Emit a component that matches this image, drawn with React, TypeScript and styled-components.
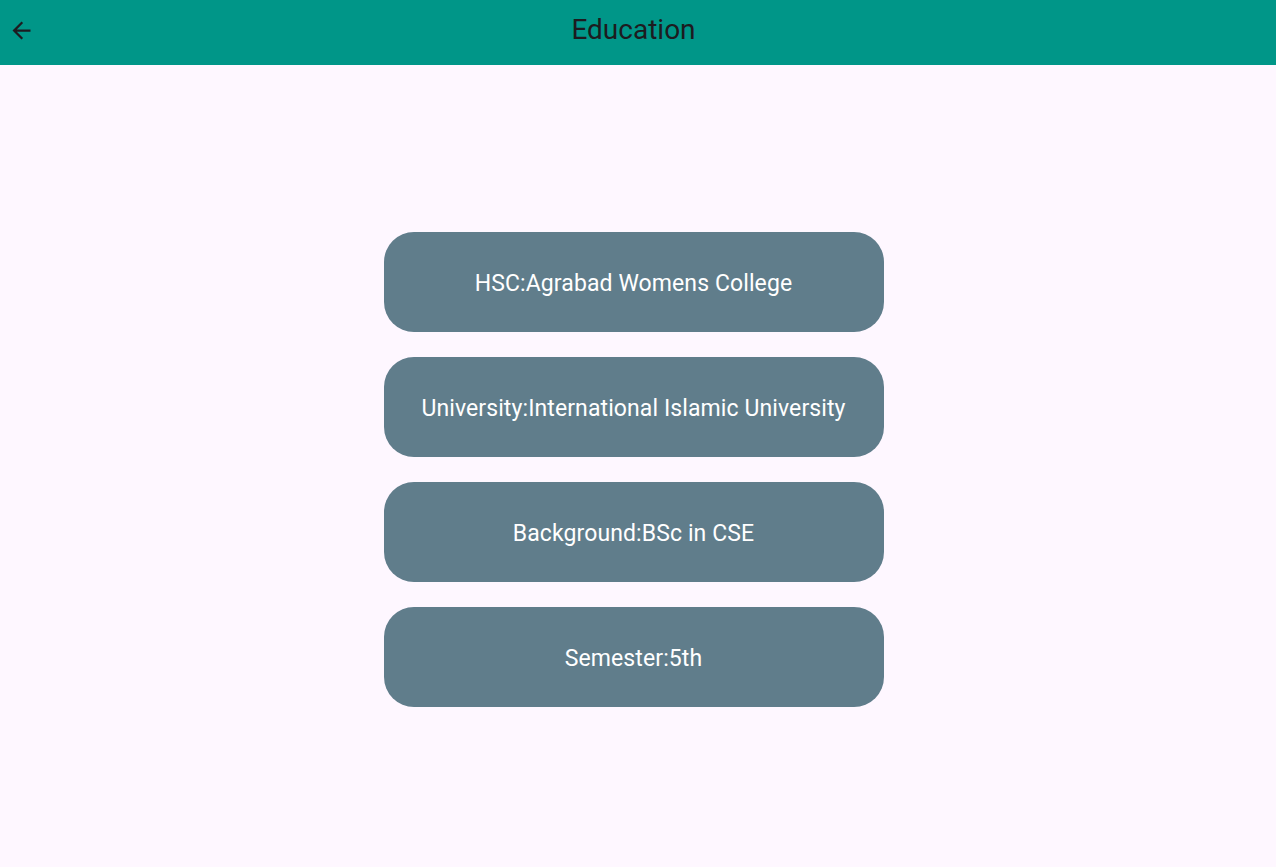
import React from "react";
import styled, { createGlobalStyle } from "styled-components";

const Global = createGlobalStyle`
  html, body { margin: 0; padding: 0; background: #fef7ff; }
  body { font-family: Roboto, "Noto Sans", sans-serif; }
`;

const Page = styled.div`
  width: 1267px;
  height: 867px;
  display: flex;
  flex-direction: column;
  background: #fef7ff;
`;

const AppBar = styled.header`
  height: 65px;
  flex: none;
  background: #009688;
  display: flex;
  align-items: center;
  position: relative;
  margin-right: -9px;
`;

const BackButton = styled.button`
  width: 48px;
  height: 48px;
  border: none;
  background: transparent;
  padding: 0 0 0 8px;
  display: flex;
  align-items: center;
  justify-content: flex-start;
  cursor: pointer;
  color: #1d1b20;
  margin-top: -5px;
`;

const Title = styled.h1`
  position: absolute;
  left: 0;
  right: 9px;
  top: 0;
  margin: 0;
  height: 60px;
  line-height: 60px;
  text-align: center;
  font-size: 28px;
  font-weight: 400;
  color: #1d1b20;
  pointer-events: none;
`;

const Body = styled.main`
  flex: 1;
  display: flex;
  flex-direction: column;
  align-items: center;
  padding-top: 167px;
  gap: 25px;
`;

const InfoButton = styled.button`
  width: 500px;
  height: 100px;
  border: none;
  border-radius: 30px;
  background: #607d8b;
  color: #ffffff;
  font-family: Roboto, "Noto Sans", sans-serif;
  font-size: 23px;
  font-weight: 400;
  letter-spacing: 0.1px;
  display: flex;
  align-items: center;
  justify-content: center;
  padding: 2px 0 0;
`;

const items = [
  "HSC:Agrabad Womens College",
  "University:International Islamic University",
  "Background:BSc in CSE",
  "Semester:5th",
];

export default function App() {
  return (
    <Page>
      <Global />
      <AppBar>
        <BackButton aria-label="Back">
          <svg width="27" height="27" viewBox="0 0 24 24" fill="currentColor">
            <path d="M20 11H7.83l5.59-5.59L12 4l-8 8 8 8 1.41-1.41L7.83 13H20v-2z" />
          </svg>
        </BackButton>
        <Title>Education</Title>
      </AppBar>
      <Body>
        {items.map((t) => (
          <InfoButton key={t}>{t}</InfoButton>
        ))}
      </Body>
    </Page>
  );
}
